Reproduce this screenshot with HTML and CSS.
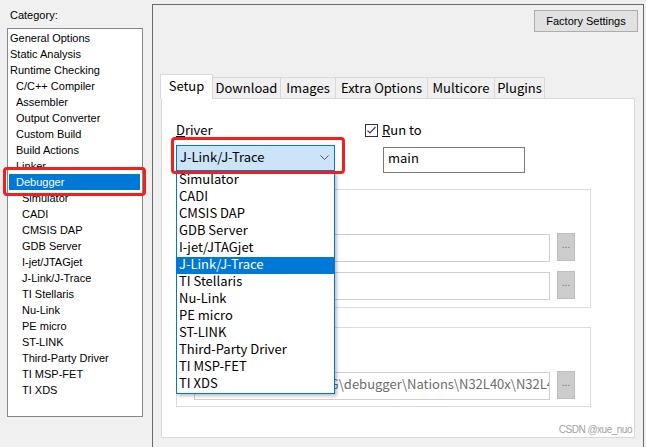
FILE: index.html
```html
<!DOCTYPE html>
<html>
<head>
<meta charset="utf-8">
<link rel="stylesheet" href="styles.css">
</head>
<body>
<div class="app">
  <aside class="cat">
    <div class="cat-label">Category:</div>
    <div class="cat-list">
      <div class="it l0">General Options</div>
      <div class="it l0">Static Analysis</div>
      <div class="it l0">Runtime Checking</div>
      <div class="it l1">C/C++ Compiler</div>
      <div class="it l1">Assembler</div>
      <div class="it l1">Output Converter</div>
      <div class="it l1">Custom Build</div>
      <div class="it l1">Build Actions</div>
      <div class="it l1">Linker</div>
      <div class="it l1 sel">Debugger</div>
      <div class="it l2">Simulator</div>
      <div class="it l2">CADI</div>
      <div class="it l2">CMSIS DAP</div>
      <div class="it l2">GDB Server</div>
      <div class="it l2">I-jet/JTAGjet</div>
      <div class="it l2">J-Link/J-Trace</div>
      <div class="it l2">TI Stellaris</div>
      <div class="it l2">Nu-Link</div>
      <div class="it l2">PE micro</div>
      <div class="it l2">ST-LINK</div>
      <div class="it l2">Third-Party Driver</div>
      <div class="it l2">TI MSP-FET</div>
      <div class="it l2">TI XDS</div>
    </div>
    <div class="annot cat-annot"></div>
  </aside>

  <section class="panel">
    <div class="topbar"><div class="btn">Factory Settings</div></div>
    <div class="tabs">
      <div class="tab on t-setup">Setup</div>
      <div class="tab t-download">Download</div>
      <div class="tab t-images">Images</div>
      <div class="tab t-extra">Extra Options</div>
      <div class="tab t-multi">Multicore</div>
      <div class="tab t-plugins">Plugins</div>
    </div>
    <div class="page">
      <div class="row1">
        <div class="drv">
          <div class="lbl"><u>D</u>river</div>
          <div class="combo-wrap">
            <div class="combo">
              <span>J-Link/J-Trace</span>
              <svg class="chev" width="9" height="5" viewBox="0 0 9 5"><polyline points="0.5,0.5 4.5,4.5 8.5,0.5" fill="none" stroke="#555" stroke-width="1"/></svg>
            </div>
            <div class="dropdown">
              <div class="dd">Simulator</div>
              <div class="dd">CADI</div>
              <div class="dd">CMSIS DAP</div>
              <div class="dd">GDB Server</div>
              <div class="dd">I-jet/JTAGjet</div>
              <div class="dd on">J-Link/J-Trace</div>
              <div class="dd">TI Stellaris</div>
              <div class="dd">Nu-Link</div>
              <div class="dd">PE micro</div>
              <div class="dd">ST-LINK</div>
              <div class="dd">Third-Party Driver</div>
              <div class="dd">TI MSP-FET</div>
              <div class="dd">TI XDS</div>
            </div>
            <div class="annot combo-annot"></div>
          </div>
        </div>
        <div class="runto">
          <div class="chkrow">
            <span class="chk"><svg width="11" height="11" viewBox="0 0 11 11"><polyline points="1.5,5.5 4,8 9.5,2" fill="none" stroke="#444" stroke-width="1.2"/></svg></span>
            <span class="lbl"><u>R</u>un to</span>
          </div>
          <div class="input main-in">main</div>
        </div>
      </div>

      <div class="grp g1">
        <div class="frow"><div class="tb"></div><div class="dots">...</div></div>
        <div class="frow"><div class="tb"></div><div class="dots">...</div></div>
      </div>
      <div class="grp g2">
        <div class="frow"><div class="tb path"><span>$TOOLKIT_DIR$\CONFIG\debugger\Nations\N32L40x\N32L4</span></div><div class="dots">...</div></div>
      </div>
      <div class="wm">CSDN @xue_nuo</div>
    </div>
  </section>
</div>
</body>
</html>
```

FILE: styles.css
```css
* { box-sizing: border-box; }
html, body { margin: 0; height: 100%; }
body {
  background: #f0f0f0;
  font-family: "Liberation Sans", Arial, sans-serif;
  font-size: 11px;
  color: #000;
  overflow: hidden;
}
.app { display: flex; height: 447px; }

/* left category list */
.cat { width: 152px; flex: none; position: relative; }
.cat-label { padding: 9px 0 0 10px; line-height: 13px; }
.cat-list {
  margin: 6px 0 0 7px;
  width: 136px;
  height: 389px;
  border: 1px solid #828790;
  background: #fff;
  padding-top: 1px;
}
.it { height: 16px; line-height: 16px; white-space: nowrap; }
.l0 { padding-left: 2px; }
.l1 { padding-left: 8px; }
.l2 { padding-left: 14px; }
.it.sel { background: #0078d7; color: #fff; margin: 0 2px 0 1px; padding-left: 7px; }

.annot {
  position: absolute;
  border: 3px solid #f0201c;
  border-radius: 4px;
  pointer-events: none;
  z-index: 5;
}
.cat-annot { left: 3px; top: 167px; width: 143px; height: 29px; }

/* right panel */
.panel {
  flex: 1;
  margin: 4px 2px 0 0;
  border: 1px solid #696969;
  border-bottom: none;
  display: flex;
  flex-direction: column;
}
.topbar { display: flex; justify-content: flex-end; padding: 5px 5px 0 0; }
.btn {
  width: 104px;
  height: 22px;
  border: 1px solid #adadad;
  background: #e1e1e1;
  display: flex;
  align-items: center;
  justify-content: center;
  font-size: 11px;
}

.tabs {
  display: flex;
  align-items: flex-end;
  height: 25px;
  margin: 42px 0 -1px 7px;
  position: relative;
  z-index: 1;
  font-family: "Noto Sans CJK SC", "Noto Sans", sans-serif;
  font-size: 13px;
}
.tab {
  height: 21px;
  margin-bottom: 1px;
  margin-left: -1px;
  border: 1px solid #d9d9d9;
  border-bottom: none;
  background: #f0f0f0;
  text-align: center;
  line-height: 13px;
  padding-top: 3px;
  white-space: nowrap;
}
.tab.on {
  height: 25px;
  margin: 0;
  background: #fff;
  padding-top: 4px;
  position: relative;
  z-index: 2;
}
.t-setup { width: 53px; }
.t-download { width: 69px; }
.t-images { width: 56px; }
.t-extra { width: 93px; }
.t-multi { width: 68px; }
.t-plugins { width: 51px; }

.page {
  flex: none;
  height: 340px;
  margin: 0 8px;
  border: 1px solid #d9d9d9;
  background: #fff;
  position: relative;
  padding: 22px 0 0 14px;
  font-family: "Noto Sans CJK SC", "Noto Sans", sans-serif;
  font-size: 13px;
}
.row1 { display: flex; }
.drv { width: 159px; }
.lbl { display: block; height: 18px; line-height: 18px; white-space: nowrap; }
.combo-wrap { position: relative; margin-top: 6px; }
.combo {
  height: 26px;
  border: 1px solid #0078d7;
  background: #cce4f7;
  display: flex;
  align-items: flex-start;
  line-height: 20px;
  padding: 1px 5px 0 3px;
}
.chev { margin-left: auto; margin-top: 8px; }
.dropdown {
  position: absolute;
  left: 0;
  top: 26px;
  width: 159px;
  border: 1px solid #0078d7;
  background: #fff;
  box-shadow: 2px 2px 3px rgba(0, 0, 0, 0.25);
  z-index: 4;
}
.dd { height: 17px; line-height: 13px; padding: 0 0 0 2px; white-space: nowrap; }
.dd.on { background: #0078d7; color: #fff; }
.combo-annot { left: -5px; top: -8px; width: 174px; height: 37px; }

.runto { margin-left: 30px; }
.chkrow { display: flex; align-items: center; height: 18px; }
.chk {
  width: 13px;
  height: 13px;
  border: 1px solid #333;
  background: #fff;
  display: flex;
  align-items: center;
  justify-content: center;
  margin-right: 4px;
}
.chkrow .lbl { display: inline-block; }
.input {
  border: 1px solid #7a7a7a;
  background: #fff;
  line-height: 20px;
  padding-left: 4px;
}
.main-in { margin: 8px 0 0 18px; width: 142px; height: 26px; }

.grp {
  width: 415px;
  border: 1px solid #dcdcdc;
  padding: 44px 0 0 17px;
}
.g1 { margin-top: 16px; height: 119px; }
.g2 { margin-top: 19px; height: 80px; }
.frow { display: flex; height: 28px; }
.frow + .frow { margin-top: 10px; }
.tb {
  width: 356px;
  height: 28px;
  border: 1px solid #cfcfcf;
  background: #fff;
}
.path {
  display: flex;
  justify-content: flex-end;
  overflow: hidden;
  color: #6d6d6d;
  line-height: 22px;
  white-space: nowrap;
}
.path span { margin-right: -5px; }
.dots {
  width: 18px;
  height: 28px;
  margin-left: 7px;
  margin-top: -1px;
  background: #cccccc;
  border: 1px solid #bdbdbd;
  color: #6d6d6d;
  font-family: "Liberation Sans", Arial, sans-serif;
  font-size: 10px;
  text-align: center;
  line-height: 22px;
}
.wm {
  position: absolute;
  right: 2px;
  bottom: 1px;
  font-family: "Liberation Sans", Arial, sans-serif;
  font-size: 10px;
  letter-spacing: -0.5px;
  color: #a0a0a0;
  line-height: 12px;
}
```
